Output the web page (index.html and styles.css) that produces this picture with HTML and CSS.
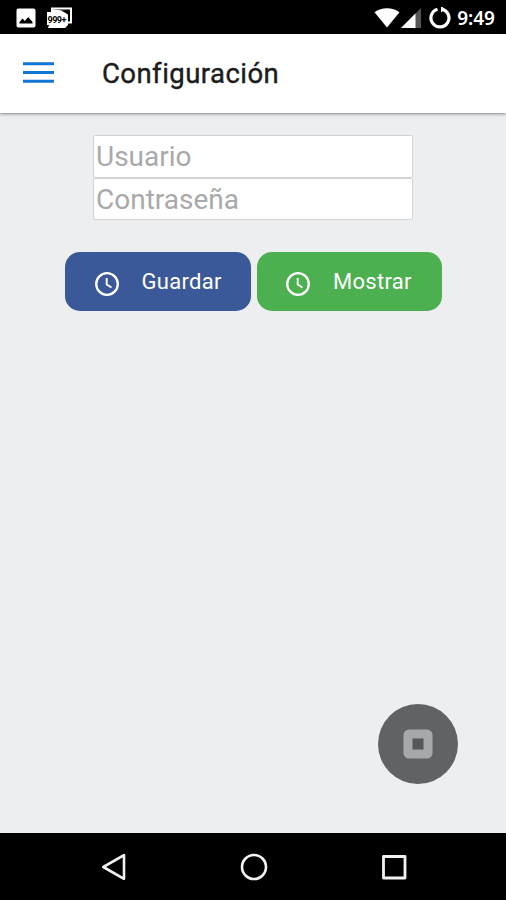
FILE: index.html
```html
<!DOCTYPE html>
<html lang="es">
<head>
    <meta charset="UTF-8">
    <meta name="viewport" content="width=device-width, initial-scale=1.0">
    <title>Configuración</title>
    <link rel="stylesheet" href="styles.css">
</head>
<body>
    <div class="status-bar">
        <svg class="icon-image" width="20" height="20" viewBox="0 0 20 20">
            <rect x="0.5" y="0.5" width="19" height="19" rx="2" fill="#fff"/>
            <path d="M3.5 15.5V14l3-3.5 2.3 2.5 3.4-4 4.3 5v1.5z" fill="#000"/>
        </svg>
        <svg class="icon-cards" width="27" height="22" viewBox="0 0 27 22">
            <path d="M5 1.500h20v14h-4" fill="none" stroke="#fff" stroke-width="2"/>
            <path d="M1 5h4V2l15 2 2 3v11l-3 3H2l1-3H1z" fill="#fff"/>
            <path d="M15 3.500h7.500V8l-2-1.500z" fill="#000"/>
            <text x="1.500" y="15.500" class="badge-text">999+</text>
        </svg>
        <span class="spacer"></span>
        <svg width="26" height="20" viewBox="0 0 26 20">
            <path d="M0.500 4.300C7.500-1 18.500-1 25.500 4.300L13 19.500z" fill="#fff"/>
        </svg>
        <svg class="icon-signal" width="20" height="20" viewBox="0 0 20 20">
            <path d="M0 20L20 0v20z" fill="#555"/>
            <path d="M0 20L14.500 5.500V20z" fill="#fff"/>
        </svg>
        <svg class="icon-sync" width="24" height="24" viewBox="0 0 24 24">
            <path d="M9.500 3.300A9 9 0 1 0 13.500 3.100" fill="none" stroke="#fff" stroke-width="3.200"/>
            <path d="M13 1v5.500l2-1.500V1z" fill="#fff"/>
        </svg>
        <span class="time">9:49</span>
    </div>

    <header class="toolbar">
        <svg width="31" height="22" viewBox="0 0 31 22">
            <path d="M0 1.750h31M0 10.500h31M0 19.250h31" stroke="#1276d6" stroke-width="3"/>
        </svg>
        <h1>Configuración</h1>
    </header>

    <main class="content">
        <form class="fields">
            <input type="text" placeholder="Usuario">
            <input type="password" placeholder="Contraseña">
        </form>
        <div class="buttons">
            <button class="btn btn-save">
                <svg width="26" height="26" viewBox="0 0 26 26" fill="none" stroke="#fff">
                    <circle cx="13" cy="13" r="10.800" stroke-width="2.300"/>
                    <path d="M12.700 7v6.500l4.800 3" stroke-width="1.900"/>
                </svg>
                <span>Guardar</span>
            </button>
            <button class="btn btn-show">
                <svg width="26" height="26" viewBox="0 0 26 26" fill="none" stroke="#fff">
                    <circle cx="13" cy="13" r="10.800" stroke-width="2.300"/>
                    <path d="M12.700 7v6.500l4.800 3" stroke-width="1.900"/>
                </svg>
                <span>Mostrar</span>
            </button>
        </div>
        <div class="fab">
            <svg width="30" height="30" viewBox="0 0 30 30">
                <rect x="0.500" y="0.500" width="29" height="29" rx="5.500" fill="#a6a8a9"/>
                <rect x="9.500" y="9.500" width="11" height="11" fill="#55585a"/>
            </svg>
        </div>
    </main>

    <nav class="nav-bar">
        <svg width="28" height="28" viewBox="0 0 28 28" fill="none" stroke="#f2f2f2" stroke-width="2.600" stroke-linejoin="round">
            <path d="M3.300 14L24 2.200v23.600z"/>
        </svg>
        <svg width="28" height="28" viewBox="0 0 28 28" fill="none" stroke="#f2f2f2" stroke-width="2.600">
            <circle cx="14" cy="14" r="12"/>
        </svg>
        <svg width="28" height="28" viewBox="0 0 28 28" fill="none" stroke="#f2f2f2" stroke-width="2.800" stroke-linejoin="round">
            <rect x="3.500" y="3.500" width="21.500" height="21.500"/>
        </svg>
    </nav>
</body>
</html>
```
FILE: styles.css
```css
body {
    display: flex;
    flex-direction: column;
    height: 900px;
    margin: 0;
    font-family: Roboto, sans-serif;
    background-color: #edeef0;
}
svg {
    display: block;
    flex-shrink: 0;
}
.status-bar {
    display: flex;
    align-items: center;
    box-sizing: border-box;
    height: 34px;
    padding: 1px 11px 0 16px;
    background-color: #000;
    color: #fff;
}
.icon-cards {
    margin-left: 10px;
}
.badge-text {
    font-size: 9px;
    font-weight: bold;
    letter-spacing: -0.5px;
    fill: #000;
}
.spacer {
    flex: 1;
}
.icon-signal {
    margin-left: 1px;
}
.icon-sync {
    margin: 0 5px 0 7px;
}
.time {
    font-family: "Noto Sans", sans-serif;
    font-size: 19px;
    font-weight: 600;
    line-height: 34px;
}
.toolbar {
    display: flex;
    align-items: center;
    box-sizing: border-box;
    height: 79px;
    padding-left: 23px;
    background-color: #fff;
    box-shadow: 0 1px 3px rgba(0, 0, 0, 0.45);
    z-index: 1;
}
.toolbar svg {
    margin-bottom: 1px;
}
.toolbar h1 {
    margin: 0 0 0 48px;
    font-size: 27.500px;
    font-weight: 400;
    letter-spacing: 0.45px;
    color: #1c1c1c;
    -webkit-text-stroke: 0.4px #1c1c1c;
}
.content {
    position: relative;
    flex: 1;
    padding-top: 22px;
}
.fields {
    display: flex;
    flex-direction: column;
    width: 320px;
    margin: 0 auto;
}
.fields input {
    box-sizing: border-box;
    height: 42.500px;
    padding: 1px 2px 0;
    border: 1px solid #d2d3d4;
    border-radius: 2px;
    background-color: #fff;
    font-family: inherit;
    font-size: 28px;
    outline: none;
}
.fields input::placeholder {
    color: #a9a9a9;
}
.buttons {
    display: flex;
    justify-content: center;
    gap: 6px;
    margin: 32px 0 0 1px;
}
.btn {
    display: flex;
    align-items: center;
    box-sizing: border-box;
    width: 185.500px;
    height: 59px;
    padding: 0 0 0 28.500px;
    border: none;
    border-radius: 15px;
    color: #fff;
    font-family: inherit;
    font-size: 22px;
    letter-spacing: 0.3px;
}
.btn svg {
    margin: 4px 22px 0 0;
}
.btn-save {
    background-color: #3b5998;
}
.btn-show {
    background-color: #4caf50;
}
.fab {
    position: absolute;
    right: 48px;
    bottom: 49px;
    display: flex;
    align-items: center;
    justify-content: center;
    width: 80px;
    height: 80px;
    border-radius: 50%;
    background-color: #606366;
}
.nav-bar {
    display: flex;
    justify-content: center;
    align-items: center;
    gap: 112px;
    height: 67px;
    padding-left: 1px;
    background-color: #000;
}
```
